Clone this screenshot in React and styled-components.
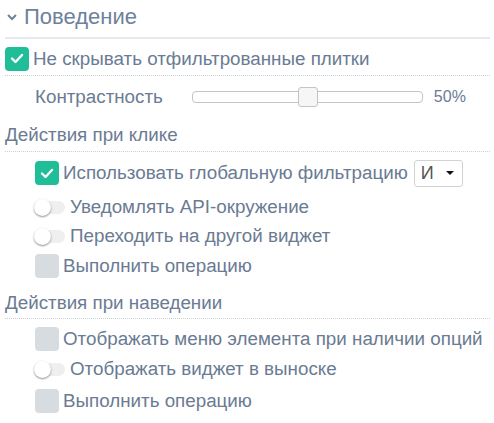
import React from "react";
import styled, { createGlobalStyle } from "styled-components";

const Global = createGlobalStyle`
  html, body { margin: 0; padding: 0; background: #fff; }
  body { font-family: "Liberation Sans", Arial, sans-serif; color: #6a7b93; }
`;

const Panel = styled.div`
  width: 494px;
  padding: 0 4px 0 5px;
  box-sizing: border-box;
`;

const Header = styled.div`
  display: flex;
  align-items: center;
  border-bottom: 2px solid #e5e8ec;
  gap: 7px;
  padding-left: 2px;
  font-size: 22px;
  color: #6e819b;
  box-sizing: border-box;
  height: 39px;
  padding-bottom: 3px;
`;

const Row = styled.div`
  display: flex;
  align-items: center;
  gap: ${(p) => p.$gap ?? 4}px;
  height: ${(p) => p.$h ?? 30}px;
  padding-left: ${(p) => (p.$indent ? 30 : 0)}px;
  padding-top: ${(p) => p.$pt ?? 0}px;
  box-sizing: border-box;
  font-size: 18.8px;
  border-bottom: ${(p) => (p.$dotted ? "1px dotted #c9ced4" : "none")};
`;

const SectionTitle = styled.div`
  display: flex;
  align-items: flex-end;
  height: 35px;
  padding-bottom: ${(p) => p.$pb ?? 5}px;
  box-sizing: border-box;
  font-size: 18.8px;
  border-bottom: 1px dotted #c9ced4;
  margin-top: ${(p) => p.$mt ?? 0}px;
`;

const Check = styled.span`
  width: 24px;
  height: 24px;
  border-radius: 4px;
  background: ${(p) => (p.$on ? "#1fbd98" : "#d7dce1")};
  display: inline-flex;
  align-items: center;
  justify-content: center;
  flex: none;
`;

const Toggle = styled.span`
  position: relative;
  width: 30px;
  height: 13px;
  border-radius: 7px;
  background: #efefef;
  flex: none;
  margin-right: 1px;
  &::after {
    content: "";
    position: absolute;
    left: -1px;
    top: -2px;
    width: 17px;
    height: 17px;
    border-radius: 50%;
    background: #fff;
    box-shadow: 0 1px 2px rgba(0,0,0,0.45);
  }
`;

const Label = styled.span`
  white-space: nowrap;
`;

const Track = styled.div`
  position: relative;
  width: 231px;
  height: 12px;
  border: 1px solid #c4c4c4;
  border-radius: 4px;
  margin-left: 25px;
  box-sizing: border-box;
`;

const Handle = styled.span`
  position: absolute;
  top: -5px;
  width: 20px;
  height: 20px;
  border: 1px solid #c4c4c4;
  border-radius: 3px;
  background: #f6f6f6;
  box-sizing: border-box;
`;

const Value = styled.span`
  margin-left: 7px;
  font-size: 16px;
`;

const Select = styled.div`
  display: flex;
  align-items: center;
  justify-content: space-between;
  width: 49px;
  height: 27px;
  box-sizing: border-box;
  border: 1px solid #d2d2d2;
  border-radius: 3px;
  padding: 0 8px 0 6px;
  margin-left: 2px;
  color: #555;
  font-size: 18px;
  background: #fff;
`;

const Tick = () => (
  <svg width="14" height="11" viewBox="0 0 14 11">
    <path d="M2 5.5 L5.5 9 L12 2" fill="none" stroke="#fff" strokeWidth="2.4" strokeLinecap="round" strokeLinejoin="round" />
  </svg>
);

const Chevron = () => (
  <svg width="10" height="7" viewBox="0 0 10 7">
    <path d="M1 1 L5 5 L9 1" fill="none" stroke="#6e819b" strokeWidth="2" />
  </svg>
);

const Caret = () => (
  <svg width="8" height="4" viewBox="0 0 8 4"><path d="M0 0 H8 L4 4 Z" fill="#111" /></svg>
);

export default function App() {
  const pct = 50;
  return (
    <Panel>
      <Global />
      <Header><Chevron /><span>Поведение</span></Header>
      <Row $h={37} $pt={3} $dotted $gap={4}>
        <Check $on><Tick /></Check>
        <Label>Не скрывать отфильтрованные плитки</Label>
      </Row>
      <Row $h={41} $indent>
        <Label>Контрастность</Label>
        <Track>
          <Handle style={{ left: `${(pct / 100) * 231 - 10}px` }} />
        </Track>
        <Value>50%</Value>
      </Row>
      <SectionTitle>Действия при клике</SectionTitle>
      <Row $h={42} $indent>
        <Check $on><Tick /></Check>
        <Label>Использовать глобальную фильтрацию</Label>
        <Select><span>И</span><Caret /></Select>
      </Row>
      <Row $h={26} $indent>
        <Toggle />
        <Label>Уведомлять API-окружение</Label>
      </Row>
      <Row $h={32} $indent>
        <Toggle />
        <Label>Переходить на другой виджет</Label>
      </Row>
      <Row $h={28} $indent>
        <Check />
        <Label>Выполнить операцию</Label>
      </Row>
      <SectionTitle $mt={4} $pb={4}>Действия при наведении</SectionTitle>
      <Row $h={40} $indent>
        <Check />
        <Label>Отображать меню элемента при наличии опций</Label>
      </Row>
      <Row $h={20} $indent>
        <Toggle />
        <Label>Отображать виджет в выноске</Label>
      </Row>
      <Row $h={44} $indent>
        <Check />
        <Label>Выполнить операцию</Label>
      </Row>
    </Panel>
  );
}
